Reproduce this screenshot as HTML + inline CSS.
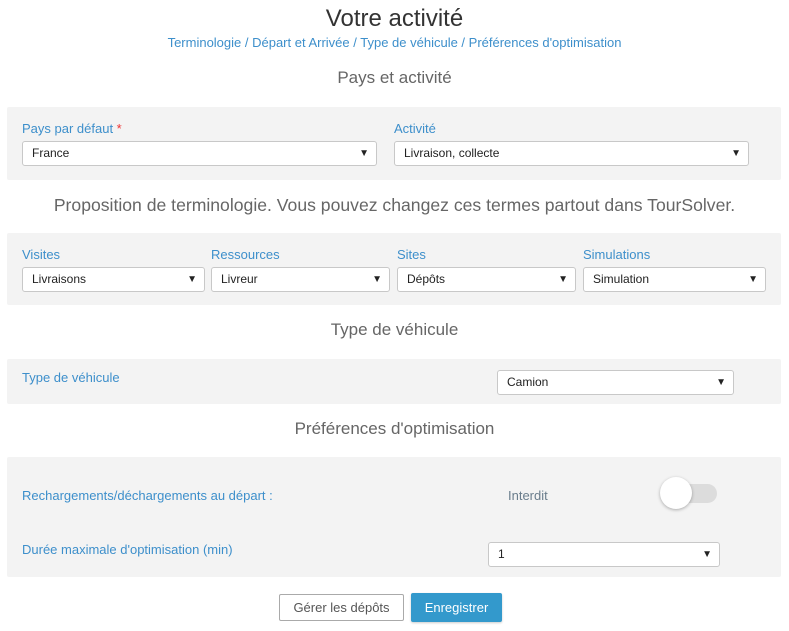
<!DOCTYPE html>
<html><head><meta charset="utf-8"><style>
body{margin:0;width:789px;height:631px;background:#fff;font-family:"Liberation Sans",sans-serif;position:relative;overflow:hidden}
.a{position:absolute}
.c{position:absolute;left:0;width:789px;text-align:center}
.p{position:absolute;left:7px;width:774px;background:#f3f3f3;border-radius:2px}
.l{position:absolute;color:#3d8fcb;font-size:13px}
.s{position:absolute;background:#fff;border:1px solid #c8c8c8;border-radius:3px;font-size:12px;color:#222;line-height:23px;padding-left:9px;box-sizing:border-box;height:25px}
.s:after{content:"▼";position:absolute;right:7px;top:0;font-size:10px;color:#222}
.h{color:#666;font-size:17px}
</style></head><body>
<div class="c" style="top:5px;font-size:24px;color:#333">Votre activité</div>
<div class="c" style="top:35px;font-size:13px;color:#3d8fcb">Terminologie / Départ et Arrivée / Type de véhicule / Préférences d'optimisation</div>
<div class="c h" style="top:68px">Pays et activité</div>
<div class="p" style="top:107px;height:73px"></div>
<div class="l" style="left:22px;top:121px">Pays par défaut <span style="color:#e33">*</span></div>
<div class="s" style="left:22px;top:141px;width:355px">France</div>
<div class="l" style="left:394px;top:121px">Activité</div>
<div class="s" style="left:394px;top:141px;width:355px">Livraison, collecte</div>
<div class="c h" style="top:195px;font-size:17.6px">Proposition de terminologie. Vous pouvez changez ces termes partout dans TourSolver.</div>
<div class="p" style="top:233px;height:72px"></div>
<div class="l" style="left:22px;top:247px">Visites</div>
<div class="s" style="left:22px;top:267px;width:183px">Livraisons</div>
<div class="l" style="left:211px;top:247px">Ressources</div>
<div class="s" style="left:211px;top:267px;width:179px">Livreur</div>
<div class="l" style="left:397px;top:247px">Sites</div>
<div class="s" style="left:397px;top:267px;width:179px">Dépôts</div>
<div class="l" style="left:583px;top:247px">Simulations</div>
<div class="s" style="left:583px;top:267px;width:183px">Simulation</div>
<div class="c h" style="top:320px">Type de véhicule</div>
<div class="p" style="top:359px;height:45px"></div>
<div class="l" style="left:22px;top:370px">Type de véhicule</div>
<div class="s" style="left:497px;top:370px;width:237px">Camion</div>
<div class="c h" style="top:419px">Préférences d'optimisation</div>
<div class="p" style="top:457px;height:120px"></div>
<div class="l" style="left:22px;top:488px">Rechargements/déchargements au départ :</div>
<div class="a" style="left:508px;top:488px;font-size:13px;color:#6a7d8c">Interdit</div>
<div class="a" style="left:662px;top:484px;width:55px;height:19px;border-radius:10px;background:#dcdcdc"></div>
<div class="a" style="left:660px;top:477px;width:32px;height:32px;border-radius:50%;background:#fff;box-shadow:0 1px 3px rgba(0,0,0,.3)"></div>
<div class="l" style="left:22px;top:542px">Durée maximale d'optimisation (min)</div>
<div class="s" style="left:488px;top:542px;width:232px">1</div>
<div class="a" style="left:279px;top:594px;width:125px;height:27px;box-sizing:border-box;border:1px solid #aaa;border-radius:2px;font-size:13px;color:#555;text-align:center;line-height:25px">Gérer les dépôts</div>
<div class="a" style="left:411px;top:593px;width:91px;height:29px;background:#3399cc;border-radius:2px;font-size:13px;color:#fff;text-align:center;line-height:29px;box-shadow:0 1px 2px rgba(0,0,0,.2)">Enregistrer</div>
</body></html>
